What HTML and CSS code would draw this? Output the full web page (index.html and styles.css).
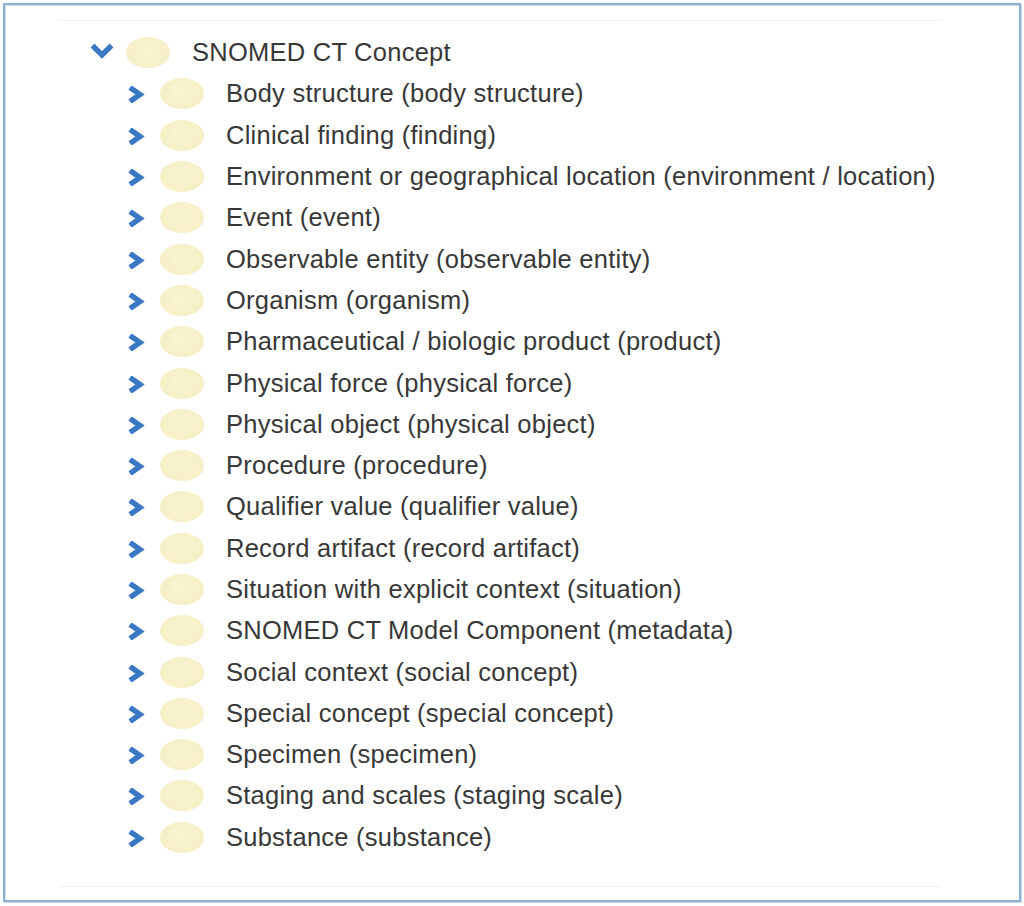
FILE: index.html
```html
<!DOCTYPE html>
<html>
<head>
<meta charset="utf-8">
<link rel="stylesheet" href="styles.css">
</head>
<body>
<div class="frame">
  <div class="panel">
    <ul class="tree">
      <li class="row root">
        <span class="toggle"><svg width="24" height="16" viewBox="0 0 24 16"><polyline points="2.5,2.5 12,12 21.5,2.5" fill="none" stroke="#3b78c3" stroke-width="5.4"/></svg></span>
        <span class="dot"></span>
        <span class="label">SNOMED CT Concept</span>
      </li>
      <li class="row child"><span class="toggle"><svg width="18" height="17" viewBox="0 0 18 17"><polyline points="3,1.5 13,8.5 3,15.5" fill="none" stroke="#3b78c3" stroke-width="5.4"/></svg></span><span class="dot"></span><span class="label">Body structure (body structure)</span></li>
      <li class="row child"><span class="toggle"><svg width="18" height="17" viewBox="0 0 18 17"><polyline points="3,1.5 13,8.5 3,15.5" fill="none" stroke="#3b78c3" stroke-width="5.4"/></svg></span><span class="dot"></span><span class="label">Clinical finding (finding)</span></li>
      <li class="row child"><span class="toggle"><svg width="18" height="17" viewBox="0 0 18 17"><polyline points="3,1.5 13,8.5 3,15.5" fill="none" stroke="#3b78c3" stroke-width="5.4"/></svg></span><span class="dot"></span><span class="label">Environment or geographical location (environment / location)</span></li>
      <li class="row child"><span class="toggle"><svg width="18" height="17" viewBox="0 0 18 17"><polyline points="3,1.5 13,8.5 3,15.5" fill="none" stroke="#3b78c3" stroke-width="5.4"/></svg></span><span class="dot"></span><span class="label">Event (event)</span></li>
      <li class="row child"><span class="toggle"><svg width="18" height="17" viewBox="0 0 18 17"><polyline points="3,1.5 13,8.5 3,15.5" fill="none" stroke="#3b78c3" stroke-width="5.4"/></svg></span><span class="dot"></span><span class="label">Observable entity (observable entity)</span></li>
      <li class="row child"><span class="toggle"><svg width="18" height="17" viewBox="0 0 18 17"><polyline points="3,1.5 13,8.5 3,15.5" fill="none" stroke="#3b78c3" stroke-width="5.4"/></svg></span><span class="dot"></span><span class="label">Organism (organism)</span></li>
      <li class="row child"><span class="toggle"><svg width="18" height="17" viewBox="0 0 18 17"><polyline points="3,1.5 13,8.5 3,15.5" fill="none" stroke="#3b78c3" stroke-width="5.4"/></svg></span><span class="dot"></span><span class="label">Pharmaceutical / biologic product (product)</span></li>
      <li class="row child"><span class="toggle"><svg width="18" height="17" viewBox="0 0 18 17"><polyline points="3,1.5 13,8.5 3,15.5" fill="none" stroke="#3b78c3" stroke-width="5.4"/></svg></span><span class="dot"></span><span class="label">Physical force (physical force)</span></li>
      <li class="row child"><span class="toggle"><svg width="18" height="17" viewBox="0 0 18 17"><polyline points="3,1.5 13,8.5 3,15.5" fill="none" stroke="#3b78c3" stroke-width="5.4"/></svg></span><span class="dot"></span><span class="label">Physical object (physical object)</span></li>
      <li class="row child"><span class="toggle"><svg width="18" height="17" viewBox="0 0 18 17"><polyline points="3,1.5 13,8.5 3,15.5" fill="none" stroke="#3b78c3" stroke-width="5.4"/></svg></span><span class="dot"></span><span class="label">Procedure (procedure)</span></li>
      <li class="row child"><span class="toggle"><svg width="18" height="17" viewBox="0 0 18 17"><polyline points="3,1.5 13,8.5 3,15.5" fill="none" stroke="#3b78c3" stroke-width="5.4"/></svg></span><span class="dot"></span><span class="label">Qualifier value (qualifier value)</span></li>
      <li class="row child"><span class="toggle"><svg width="18" height="17" viewBox="0 0 18 17"><polyline points="3,1.5 13,8.5 3,15.5" fill="none" stroke="#3b78c3" stroke-width="5.4"/></svg></span><span class="dot"></span><span class="label">Record artifact (record artifact)</span></li>
      <li class="row child"><span class="toggle"><svg width="18" height="17" viewBox="0 0 18 17"><polyline points="3,1.5 13,8.5 3,15.5" fill="none" stroke="#3b78c3" stroke-width="5.4"/></svg></span><span class="dot"></span><span class="label">Situation with explicit context (situation)</span></li>
      <li class="row child"><span class="toggle"><svg width="18" height="17" viewBox="0 0 18 17"><polyline points="3,1.5 13,8.5 3,15.5" fill="none" stroke="#3b78c3" stroke-width="5.4"/></svg></span><span class="dot"></span><span class="label">SNOMED CT Model Component (metadata)</span></li>
      <li class="row child"><span class="toggle"><svg width="18" height="17" viewBox="0 0 18 17"><polyline points="3,1.5 13,8.5 3,15.5" fill="none" stroke="#3b78c3" stroke-width="5.4"/></svg></span><span class="dot"></span><span class="label">Social context (social concept)</span></li>
      <li class="row child"><span class="toggle"><svg width="18" height="17" viewBox="0 0 18 17"><polyline points="3,1.5 13,8.5 3,15.5" fill="none" stroke="#3b78c3" stroke-width="5.4"/></svg></span><span class="dot"></span><span class="label">Special concept (special concept)</span></li>
      <li class="row child"><span class="toggle"><svg width="18" height="17" viewBox="0 0 18 17"><polyline points="3,1.5 13,8.5 3,15.5" fill="none" stroke="#3b78c3" stroke-width="5.4"/></svg></span><span class="dot"></span><span class="label">Specimen (specimen)</span></li>
      <li class="row child"><span class="toggle"><svg width="18" height="17" viewBox="0 0 18 17"><polyline points="3,1.5 13,8.5 3,15.5" fill="none" stroke="#3b78c3" stroke-width="5.4"/></svg></span><span class="dot"></span><span class="label">Staging and scales (staging scale)</span></li>
      <li class="row child"><span class="toggle"><svg width="18" height="17" viewBox="0 0 18 17"><polyline points="3,1.5 13,8.5 3,15.5" fill="none" stroke="#3b78c3" stroke-width="5.4"/></svg></span><span class="dot"></span><span class="label">Substance (substance)</span></li>
    </ul>
  </div>
</div>
</body>
</html>
```

FILE: styles.css
```css
html, body {
  margin: 0;
  padding: 0;
  background: #ffffff;
}
body {
  width: 1024px;
  height: 906px;
  padding: 3px;
  box-sizing: border-box;
  font-family: "Liberation Sans", Arial, sans-serif;
}
.frame {
  width: 1018px;
  height: 899px;
  box-sizing: border-box;
  border: 2px solid #8fb0d1;
  box-shadow: inset 1px 1px 0 #cddceb, 1px 1px 0 #c7d7e8;
  padding: 15px 0 0 55px;
}
.panel {
  width: 880px;
  height: 867px;
  box-sizing: border-box;
  border-top: 1px solid #f1f3f5;
  border-bottom: 1px solid #eef0f2;
  padding-top: 11px;
}
.tree {
  list-style: none;
  margin: 0;
  padding: 0;
}
.row {
  display: flex;
  align-items: center;
  height: 41.3px;
}
.root {
  padding-left: 30px;
}
.child {
  padding-left: 64px;
}
.toggle {
  width: 24px;
  display: flex;
  justify-content: center;
  align-items: center;
}
.root .toggle svg {
  margin-top: -4px;
}
.child .toggle svg {
  margin-top: 2px;
}
.dot {
  width: 44px;
  height: 31px;
  border-radius: 50%;
  background: radial-gradient(ellipse at 50% 45%, #f9f4d2 0%, #f6efc6 70%, #f1e9bb 100%);
  margin-left: 12px;
  margin-right: 22px;
  flex: none;
}
.label {
  font-size: 25.5px;
  color: #383838;
  letter-spacing: 0.25px;
  white-space: nowrap;
}
```
